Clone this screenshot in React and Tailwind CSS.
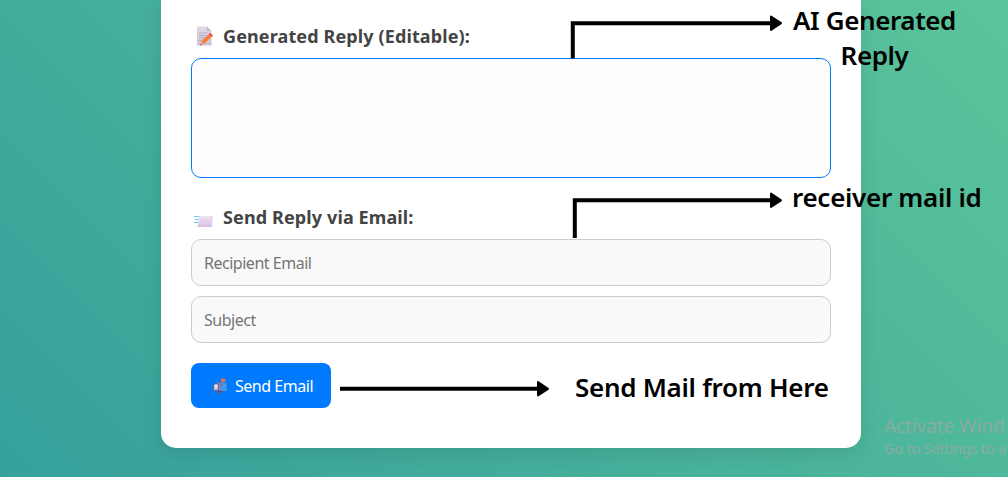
function MemoIcon() {
  return (
    <svg className="h-[20px] w-[18px] shrink-0" viewBox="0 0 18 20">
      <defs>
        <linearGradient id="memo" x1="0" y1="0" x2="0" y2="1">
          <stop offset="0" stopColor="#e0d8e6" />
          <stop offset="1" stopColor="#cdc2d6" />
        </linearGradient>
      </defs>
      <path d="M1 .5h10l4.500 4.500V19.500H1z" fill="url(#memo)" />
      <path d="M11 .5 15.500 5H11z" fill="#c3b8ce" />
      <path d="M3 7h9M3 9.500h8M3 12h6M3 14.500h3" stroke="#b5aac0" strokeWidth=".8" />
      <path d="m5.300 15.300 7.500-7.100 2.700 2.900-7.500 7z" fill="#fb7b3c" />
      <path d="m12.600 8.300 1.700-1.600 2.800 2.900-1.700 1.600z" fill="#f8525c" />
      <path d="m5.300 15.300-1.200 4 3.900-1.200z" fill="#f3a070" />
      <path d="m4.500 17.900-.5 1.500 1.600-.5z" fill="#5b4155" />
    </svg>
  );
}

function IncomingMailIcon() {
  return (
    <svg className="h-[14px] w-[20px] shrink-0" viewBox="0 0 20 14">
      <defs>
        <linearGradient id="mail" x1="0" y1="0" x2="0" y2="1">
          <stop offset="0" stopColor="#eee6f1" />
          <stop offset="1" stopColor="#dac3e6" />
        </linearGradient>
      </defs>
      <path d="M0 2.500h5M1 5.500h4M0 8.500h4" stroke="#63cdf5" strokeWidth="1" />
      <path d="M4.800 2H19l-1 10.500H3.800z" fill="url(#mail)" />
      <path d="m4.800 2 6.400 5.700L19 2M3.900 12l5.600-5.500M18 12l-4.800-5.500" fill="none" stroke="#d6c6de" strokeWidth=".6" />
      <path d="M3.800 12.300H18" stroke="#c9a9dc" strokeWidth=".8" />
    </svg>
  );
}

function MailboxIcon() {
  return (
    <svg className="h-[16px] w-[14px] shrink-0" viewBox="0 0 14 16">
      <path d="M5.300 12h2v4h-2z" fill="#8b4a4c" />
      <path d="M3 4.500h8a2.800 2.800 0 0 1 2.800 2.800V13H3z" fill="#4a98dd" />
      <path d="M.2 7.500a2.700 2.700 0 0 1 5.600 0V13H.2z" fill="#6b6287" />
      <path d="M1.200 7.800a1.800 1.800 0 0 1 3.700 0V12H1.200z" fill="#e8dcec" />
      <path d="M1.200 9.800h3.700V12H1.200z" fill="#c7b2d5" />
      <path d="M8.500 1v8" stroke="#bd5361" strokeWidth="1.100" />
      <path d="M8 .8h4.300v3H8z" fill="#f36d4d" />
      <path d="M4.500 13.200h5" stroke="#7d3b5d" strokeWidth="1" />
    </svg>
  );
}

const label = "whitespace-nowrap text-[18px] leading-[25px] font-bold tracking-[0.12px] text-[#444]";
const field =
  "block h-[47px] w-full rounded-[10px] border border-[#ccc] bg-[#f9f9f9] px-3 text-[16px] tracking-[-0.48px] text-[#333] outline-none placeholder:text-[#757575]";
const note =
  "absolute whitespace-nowrap font-['Noto_Sans',sans-serif] text-[26px] leading-[35px] font-semibold text-black";

export default function App() {
  return (
    <div className="relative flex h-[477px] w-full justify-center overflow-hidden bg-linear-[45deg,#36a09c,#5bc49a] pl-[14px] font-['Noto_Sans','Open_Sans',sans-serif]">
      <main className="h-[448px] w-[700px] shrink-0 rounded-b-[15px] bg-white px-[30px] pt-[24px] shadow-[0_5px_20px_rgba(0,0,0,0.1)]">
        <div className="flex h-[34px] items-start pl-[5px]">
          <div className="flex w-[27px] pt-[2px]"><MemoIcon /></div>
          <label htmlFor="reply" className={label}>Generated Reply (Editable):</label>
        </div>
        <textarea id="reply" className="block h-[120px] w-full resize-none rounded-[10px] border border-[#007bff] bg-[#fdfdfd] p-3 outline-none" />
        <div className="mt-[27px] flex h-[34px] items-start pl-[3px]">
          <div className="flex w-[29px] pt-[9px]"><IncomingMailIcon /></div>
          <h2 className={label}>Send Reply via Email:</h2>
        </div>
        <div className="flex flex-col gap-[10px]">
          <input className={field} placeholder="Recipient Email" />
          <input className={field} placeholder="Subject" />
        </div>
        <button className="mt-[20px] flex h-[45px] w-[140px] items-center rounded-[8px] bg-[#007bff] pl-[22px] text-[16px] text-white">
          <MailboxIcon />
          <span className="ml-[8px] pt-px whitespace-nowrap tracking-[-0.47px]">Send Email</span>
        </button>
      </main>

      <svg className="pointer-events-none absolute top-0 left-0 h-[477px] w-[1008px]" viewBox="0 0 1008 477">
        <g fill="none" stroke="#000" strokeWidth="4">
          <path d="M572.800 58.500V23.200H772" />
          <path d="M574.800 238V200.300H772" />
          <path d="M340 388.800H540" />
        </g>
        <g stroke="#000" strokeWidth="2" strokeLinejoin="round">
          <path d="M771 16.500 781 23.200 771 30z" />
          <path d="M771 193.500 781 200.300 771 207z" />
          <path d="M538 382 548 388.800 538 395.500z" />
        </g>
      </svg>

      <p className={`${note} top-[3px] left-[793px] w-[163px] text-center tracking-[-0.4px]`}>
        AI Generated<br />Reply
      </p>
      <p className={`${note} top-[180px] left-[792px] tracking-[-0.3px]`}>receiver mail id</p>
      <p className={`${note} top-[370px] left-[575px] tracking-[-0.28px]`}>Send Mail from Here</p>

      <div className="absolute top-[414px] left-[884px] whitespace-nowrap text-[#8aaba3]">
        <p className="text-[19px] leading-[24px] tracking-[-0.1px]">Activate Wind</p>
        <p className="text-[14.5px] leading-[20px] tracking-[-0.2px]">Go to Settings to a</p>
      </div>
    </div>
  );
}
